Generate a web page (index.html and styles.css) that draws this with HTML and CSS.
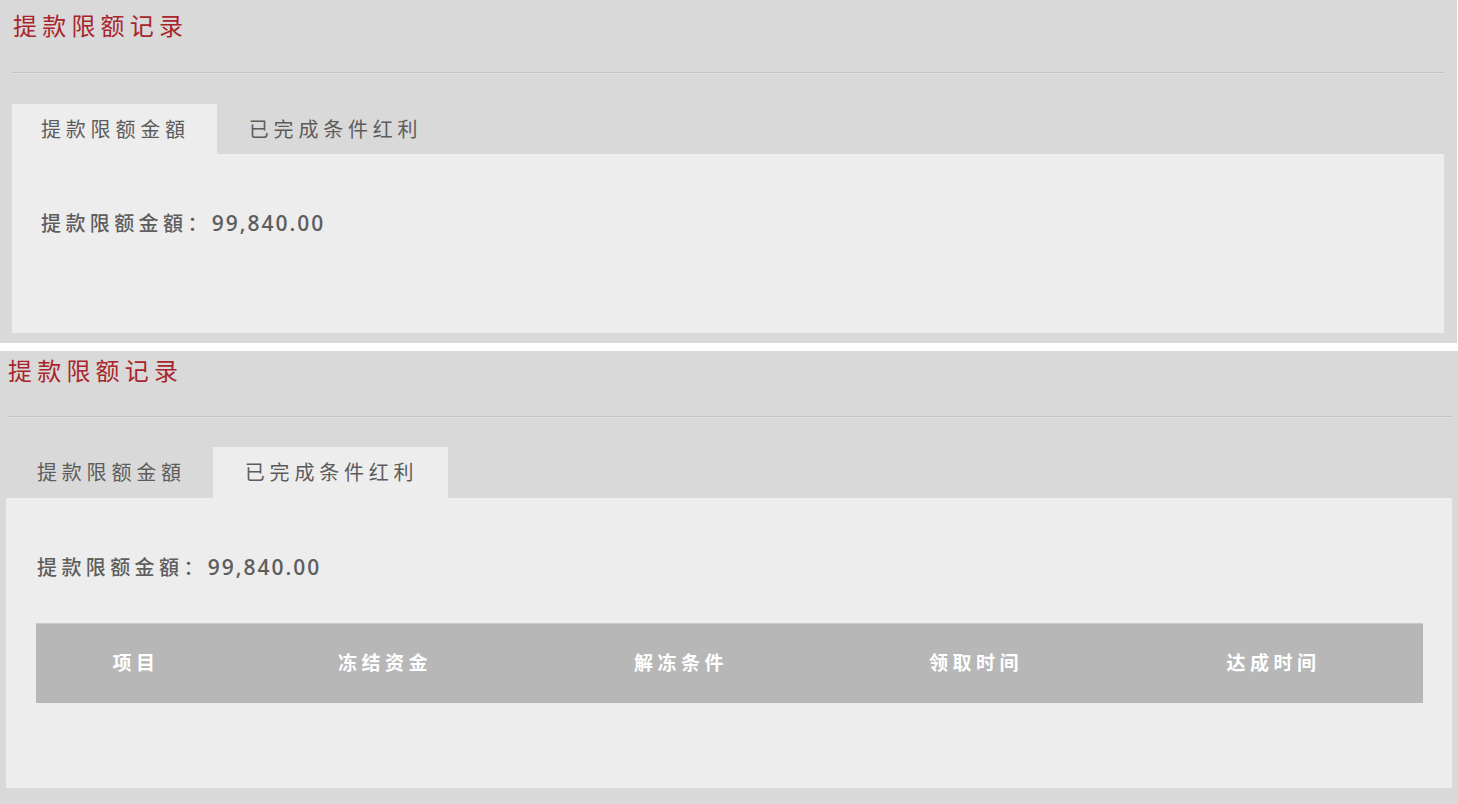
FILE: index.html
```html
<!DOCTYPE html>
<html lang="zh">
<head>
<meta charset="utf-8">
<title>提款限额记录</title>
<link rel="stylesheet" href="styles.css">
</head>
<body>
<section class="panel panel-a">
  <h1 class="title">提款限额记录</h1>
  <div class="rule"></div>
  <div class="tabs">
    <div class="tab active">提款限额金額</div>
    <div class="tab">已完成条件红利</div>
  </div>
  <div class="box">
    <p class="amount"><span class="label">提款限额金額：</span><span class="num">99,840.00</span></p>
  </div>
</section>
<section class="panel panel-b">
  <h1 class="title">提款限额记录</h1>
  <div class="rule"></div>
  <div class="tabs">
    <div class="tab">提款限额金額</div>
    <div class="tab active">已完成条件红利</div>
  </div>
  <div class="box">
    <p class="amount"><span class="label">提款限额金額：</span><span class="num">99,840.00</span></p>
    <table class="grid">
      <colgroup>
        <col class="c1"><col class="c2"><col class="c3"><col class="c4"><col class="c5">
      </colgroup>
      <thead>
        <tr><th>项目</th><th>冻结资金</th><th>解冻条件</th><th>领取时间</th><th>达成时间</th></tr>
      </thead>
    </table>
  </div>
</section>
</body>
</html>
```
FILE: styles.css
```css
* { box-sizing: border-box; }
html, body { margin: 0; padding: 0; background: #ffffff; }
body {
  font-family: "Open Sans", "Noto Sans CJK SC", sans-serif;
  color: #5a5a5a;
  overflow: hidden;
}
.panel {
  background: #d9d9d9;
  display: flex;
  flex-direction: column;
}
.panel-a {
  width: 1457px;
  height: 343px;
  padding: 0 13px 0 12px;
}
.panel-b {
  width: 1458px;
  height: 453px;
  margin-top: 8px;
  padding: 0 6px 0 6px;
}
.title {
  margin: 0;
  font-family: "Noto Sans CJK SC", sans-serif;
  font-weight: 400;
  font-size: 24px;
  letter-spacing: 5.2px;
  color: #a8262b;
}
.panel-a .title { line-height: 50px; height: 50px; margin-bottom: 22px; margin-left: 1px; }
.panel-b .title { line-height: 38px; height: 38px; margin-left: 2px; margin-bottom: 27px; }
.rule {
  height: 2px;
  border-top: 1px solid #c3c3c3;
  border-bottom: 1px solid #e2e2e2;
}
.panel-b .rule { margin-left: 1px; }
.tabs {
  display: flex;
  margin-top: 30px;
}
.panel-b .tabs { margin-top: 29px; }
.tab {
  height: 50px;
  line-height: 50px;
  padding: 0 27px 0 29px;
  font-family: "Noto Sans CJK SC", sans-serif;
  font-size: 20px;
  letter-spacing: 4.8px;
  color: #5c5c5c;
}
.panel-b .tab { height: 51px; }
.panel-a .tab:nth-child(2) { padding-left: 32px; }
.panel-b .tab:first-child { padding-left: 31px; }
.tab.active { background: #ededed; }
.panel-b .tab.active { padding: 0 30px 0 32px; }
.box {
  background: #ededed;
  padding: 57px 30px 0 29px;
}
.panel-a .box { height: 179px; }
.panel-b .box { height: 290px; padding-left: 31px; }
.amount {
  margin: 0;
  font-size: 20px;
  line-height: 24px;
  color: #5e5e5e;
  white-space: nowrap;
}
.label {
  font-family: "Noto Sans CJK SC", sans-serif;
  font-weight: 500;
  letter-spacing: 4.4px;
}
.num {
  font-family: "Open Sans", sans-serif;
  font-weight: 600;
  font-size: 21px;
  letter-spacing: 2px;
}
.grid {
  margin: 43px 0 0 -1px;
  width: 1387px;
  border-collapse: collapse;
  table-layout: fixed;
}
.c1 { width: 200px; }
.c2 { width: 298px; }
.c3 { width: 294px; }
.c4 { width: 296px; }
.c5 { width: 299px; }
.grid th {
  height: 79px;
  padding: 0 0 3px 0;
  background: #b7b7b7;
  border-top: 1px solid #c8c8c8;
  color: #ffffff;
  font-family: "Noto Sans CJK SC", sans-serif;
  font-weight: 700;
  font-size: 19px;
  letter-spacing: 4.5px;
  text-align: center;
}
```
